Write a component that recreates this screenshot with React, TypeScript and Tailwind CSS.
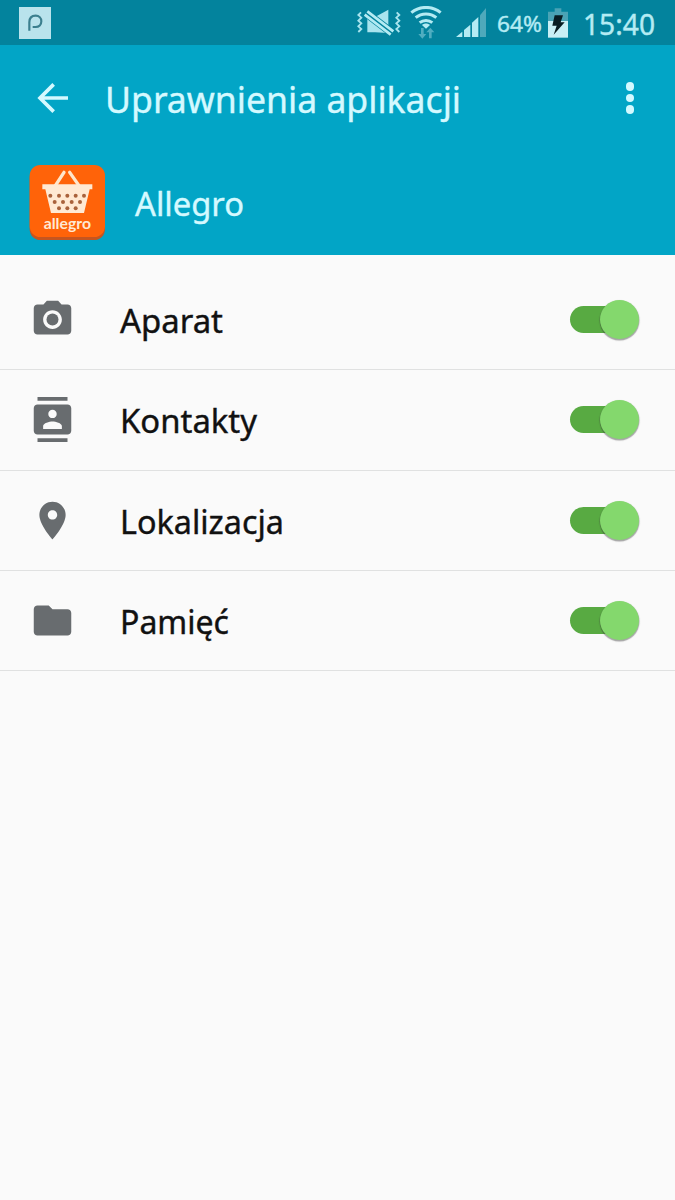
import React, { useState } from 'react';

interface Permission {
  id: string;
  label: string;
  width: number;
  icon: React.ReactNode;
}

const permissions: Permission[] = [
  {
    id: 'camera',
    label: 'Aparat',
    width: 103,
    icon: (
      <>
        <circle cx="12" cy="12" r="3.2" />
        <path d="M9 2L7.17 4H4c-1.1 0-2 .9-2 2v12c0 1.1.9 2 2 2h16c1.1 0 2-.9 2-2V6c0-1.1-.9-2-2-2h-3.17L15 2H9zm3 15c-2.76 0-5-2.24-5-5s2.24-5 5-5 5 2.24 5 5-2.24 5-5 5z" />
      </>
    ),
  },
  {
    id: 'contacts',
    label: 'Kontakty',
    width: 137,
    icon: (
      <path d="M20 0H4v2h16V0zM4 24h16v-2H4v2zM20 4H4c-1.1 0-2 .9-2 2v12c0 1.1.9 2 2 2h16c1.1 0 2-.9 2-2V6c0-1.1-.9-2-2-2zm-8 2.75c1.24 0 2.25 1.01 2.25 2.25s-1.01 2.25-2.25 2.25S9.75 10.24 9.75 9 10.76 6.75 12 6.75zM17 17H7v-1.5c0-1.67 3.33-2.5 5-2.5s5 .83 5 2.5V17z" />
    ),
  },
  {
    id: 'location',
    label: 'Lokalizacja',
    width: 164,
    icon: (
      <path d="M12 2C8.13 2 5 5.13 5 9c0 5.25 7 13 7 13s7-7.75 7-13c0-3.87-3.13-7-7-7zm0 9.5c-1.38 0-2.5-1.12-2.5-2.5s1.12-2.5 2.5-2.5 2.5 1.12 2.5 2.5-1.12 2.5-2.5 2.5z" />
    ),
  },
  {
    id: 'storage',
    label: 'Pamięć',
    width: 109,
    icon: (
      <path d="M10 4H4c-1.1 0-1.99.9-1.99 2L2 18c0 1.1.9 2 2 2h16c1.1 0 2-.9 2-2V8c0-1.1-.9-2-2-2h-8l-2-2z" />
    ),
  },
];

const NotificationIcon = () => (
  <svg className="ml-[19px] h-8 w-8 shrink-0" viewBox="0 0 96 96">
    <rect width="96" height="96" fill="#b9e3ec" />
    <path
      d="M31 71V46c0-13 8-20 19-20 10 0 17 7 17 17s-7 17-17 17h-9"
      fill="none"
      stroke="#3b7f8e"
      strokeWidth="6.5"
    />
  </svg>
);

const MuteIcon = () => (
  <svg className="h-[28px] w-[44px] shrink-0" viewBox="0 0 132 84">
    <g fill="none" stroke="#a9e4ee" strokeWidth="5.5">
      <path d="M12 10L4 18l9 8-9 9 9 8-9 9 9 8-9 9" />
      <path d="M119 10l8 8-9 8 9 9-9 8 9 9-9 8 9 9" />
    </g>
    <path d="M31 24h23L94 2v70L54 70H31z" fill="#a9e4ee" />
    <path d="M22 8l86 66" stroke="#03839d" strokeWidth="25" />
    <path d="M31 7l78 60M23 17l78 60" stroke="#b4ebf3" strokeWidth="8" />
  </svg>
);

const WifiIcon = () => (
  <svg className="ml-[9px] h-[33px] w-[32px] shrink-0" viewBox="0 0 96 99">
    <g fill="none" stroke="#b4ebf3" strokeWidth="9">
      <path d="M4 20c25-21 63-21 88 0" />
      <path d="M17 35c18-15 44-15 62 0" />
      <path d="M29 50c11-9 27-9 38 0" />
    </g>
    <path d="M48 68L36 57c7-6 17-6 24 0z" fill="#b4ebf3" />
    <g fill="#4fadc0">
      <path d="M33 66h8v18h8L37 98 25 84h8z" />
      <path d="M57 97h8V79h8L61 65 49 79h8z" />
    </g>
  </svg>
);

const SignalIcon = () => (
  <svg className="ml-[14px] h-[31px] w-[31px] shrink-0" viewBox="0 0 93 93">
    <g fill="#b4ebf3">
      <path d="M0 90l19-16v16z" />
      <path d="M24 69l19-16v37H24z" />
      <path d="M48 47l19-17v60H48z" />
    </g>
    <path d="M72 25L90 3v87H72z" fill="#4fa9bb" />
  </svg>
);

const BatteryIcon = () => (
  <svg className="h-[32px] w-[20px] shrink-0" viewBox="0 0 60 96">
    <path d="M20 4h20v10h20v28H0V14h20z" fill="#4aa3b5" />
    <path d="M0 42h60v50H0z" fill="#c9eff5" />
    <path d="M20 25h25l-7 21h12L17 83l9-27H13z" fill="#081c22" />
  </svg>
);

// Plain text stretched to a fixed advance width
const Label: React.FC<{ text: string; width: number; size: number; className?: string }> = ({
  text,
  width,
  size,
  className,
}) => (
  <svg className={`h-12 shrink-0 overflow-visible ${className ?? ''}`} width={width} height="48">
    <text
      x="0"
      y="36"
      fontSize={size}
      textLength={width}
      lengthAdjust="spacingAndGlyphs"
      fill="currentColor"
      stroke="currentColor"
      strokeWidth="0.4"
    >
      {text}
    </text>
  </svg>
);

const StatusBar = () => (
  <div className="flex h-[45px] items-center bg-[#03839d] text-[#b4ebf3]">
    <NotificationIcon />
    <div className="ml-auto flex items-center pr-[20px]">
      <MuteIcon />
      <WifiIcon />
      <SignalIcon />
      <Label text="64%" width={45} size={22} className="-mt-[6px] ml-[10px]" />
      <div className="ml-[6px]">
        <BatteryIcon />
      </div>
      <Label text="15:40" width={72} size={29} className="ml-[15px]" />
    </div>
  </div>
);

const AllegroIcon = () => (
  <svg className="ml-[29px] h-[76px] w-[77px] shrink-0" viewBox="0 0 231 228">
    <rect x="2" y="6" width="226" height="219" rx="32" fill="#c6551f" />
    <rect x="2" y="0" width="226" height="216" rx="32" fill="#ff6309" />
    <path d="M105 22L79 62M122 22l28 40" stroke="#ffe6cb" strokeWidth="10" strokeLinecap="round" />
    <path d="M40 58h150v15h-8l-17 71H66L49 73h-9z" fill="#ffe9d3" />
    <g fill="#a9623c">
      {[64, 90, 115, 140, 165].map((x) => (
        <circle key={x} cx={x} cy="92" r="6" />
      ))}
      {[77, 102, 128, 153].map((x) => (
        <circle key={x} cx={x} cy="111" r="6" />
      ))}
      {[90, 115, 140].map((x) => (
        <circle key={x} cx={x} cy="130" r="6" />
      ))}
    </g>
    <text
      x="44"
      y="192"
      fontSize="46"
      fontWeight="700"
      textLength="142"
      lengthAdjust="spacingAndGlyphs"
      fill="#ffe9d3"
      className="font-['Lato',sans-serif]"
    >
      allegro
    </text>
  </svg>
);

const Switch: React.FC<{ checked: boolean; onChange: () => void; label: string }> = ({
  checked,
  onChange,
  label,
}) => (
  <button
    type="button"
    role="switch"
    aria-checked={checked}
    aria-label={label}
    onClick={onChange}
    className={`mr-[36px] ml-auto flex h-10 w-[69px] items-center rounded-full ${
      checked ? 'justify-end' : 'justify-start'
    }`}
  >
    <span
      className={`-mr-[20px] h-[27px] w-[50px] rounded-full ${checked ? 'bg-[#58aa42]' : 'order-last bg-gray-400'}`}
    />
    <span
      className={`relative size-[39px] rounded-full shadow-[0_1px_1px_0.5px_rgba(60,60,60,0.45)] ${
        checked ? 'bg-[#84d86d]' : 'bg-gray-100'
      }`}
    />
  </button>
);

const App: React.FC = () => {
  const [enabled, setEnabled] = useState<Record<string, boolean>>({
    camera: true,
    contacts: true,
    location: true,
    storage: true,
  });

  const toggle = (id: string) => setEnabled((prev) => ({ ...prev, [id]: !prev[id] }));

  return (
    <div className="min-h-screen w-full overflow-hidden bg-[#fafafa] font-['Noto_Sans',sans-serif]">
      <StatusBar />
      <header className="h-[210px] bg-[#02a5c6] text-[#d4f9ff]">
        <div className="flex h-[106px] items-center">
          <button type="button" aria-label="Wstecz" className="ml-[37px]">
            <svg className="h-[30px] w-[32px]" viewBox="0 0 96 90" fill="none" stroke="currentColor" strokeWidth="11">
              <path d="M93 45H9M50 4L9 45l41 41" />
            </svg>
          </button>
          <Label text="Uprawnienia aplikacji" width={356} size={37} className="mt-[5px] ml-[36px]" />
          <button type="button" aria-label="Więcej" className="mr-[41px] ml-auto flex flex-col gap-[3px]">
            <span className="size-[8.5px] rounded-full bg-current" />
            <span className="size-[8.5px] rounded-full bg-current" />
            <span className="size-[8.5px] rounded-full bg-current" />
          </button>
        </div>
        <div className="flex h-[104px] items-start pt-[14px]">
          <AllegroIcon />
          <Label text="Allegro" width={109} size={33.5} className="mt-[15px] ml-[29px]" />
        </div>
      </header>
      <main className="pt-[15px]">
        {permissions.map((permission) => (
          <div key={permission.id} className="flex h-[100.3px] items-center border-b-[1.5px] border-[#e0e1e1]">
            <svg className="ml-[30px] size-[45px] shrink-0 fill-[#686c6f]" viewBox="0 0 24 24">
              {permission.icon}
            </svg>
            <Label
              text={permission.label}
              width={permission.width}
              size={33.5}
              className="mt-[3px] ml-[45px] text-[#111]"
            />
            <Switch
              checked={enabled[permission.id]}
              onChange={() => toggle(permission.id)}
              label={permission.label}
            />
          </div>
        ))}
      </main>
    </div>
  );
};

export default App;
